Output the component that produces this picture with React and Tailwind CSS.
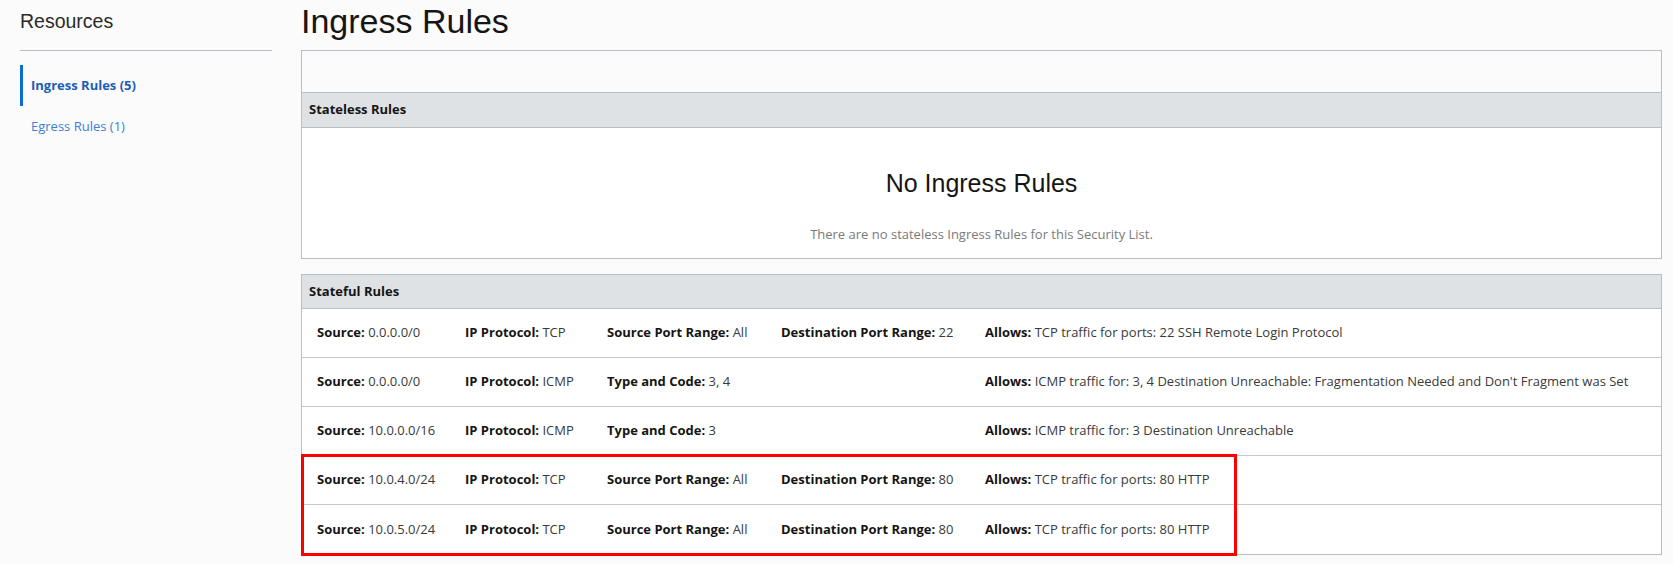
import React from 'react';

// Stateful rules shown in the second panel
const statefulRules = [
  {
    source: '0.0.0.0/0',
    protocol: 'TCP',
    third: { label: 'Source Port Range:', value: 'All' },
    fourth: { label: 'Destination Port Range:', value: '22' },
    allows: 'TCP traffic for ports: 22 SSH Remote Login Protocol',
  },
  {
    source: '0.0.0.0/0',
    protocol: 'ICMP',
    third: { label: 'Type and Code:', value: '3, 4' },
    fourth: null,
    allows: "ICMP traffic for: 3, 4 Destination Unreachable: Fragmentation Needed and Don't Fragment was Set",
  },
  {
    source: '10.0.0.0/16',
    protocol: 'ICMP',
    third: { label: 'Type and Code:', value: '3' },
    fourth: null,
    allows: 'ICMP traffic for: 3 Destination Unreachable',
  },
  {
    source: '10.0.4.0/24',
    protocol: 'TCP',
    third: { label: 'Source Port Range:', value: 'All' },
    fourth: { label: 'Destination Port Range:', value: '80' },
    allows: 'TCP traffic for ports: 80 HTTP',
  },
  {
    source: '10.0.5.0/24',
    protocol: 'TCP',
    third: { label: 'Source Port Range:', value: 'All' },
    fourth: { label: 'Destination Port Range:', value: '80' },
    allows: 'TCP traffic for ports: 80 HTTP',
  },
];

function Field({ label, value }) {
  return (
    <span className="whitespace-nowrap">
      <span className="font-bold text-[#161513]">{label}</span>{' '}
      <span className="text-[#3a3a3a]">{value}</span>
    </span>
  );
}

function RuleRow({ rule, last }) {
  return (
    <div
      className={`h-[49px] grid grid-cols-[148px_142px_174px_204px_1fr] items-center pl-[15px] text-[13px] ${
        last ? '' : 'border-b border-[#c3c8ce]'
      }`}
    >
      <Field label="Source:" value={rule.source} />
      <Field label="IP Protocol:" value={rule.protocol} />
      <Field label={rule.third.label} value={rule.third.value} />
      {rule.fourth ? <Field label={rule.fourth.label} value={rule.fourth.value} /> : <span />}
      <Field label="Allows:" value={rule.allows} />
    </div>
  );
}

export default function App() {
  const highlighted = statefulRules.slice(3);
  const plain = statefulRules.slice(0, 3);

  return (
    <div className="w-[1673px] h-[564px] bg-[#fbfbfb] flex font-['Open_Sans',sans-serif] overflow-hidden">
      {/* --- SIDEBAR --- */}
      <div className="w-[252px] ml-[20px] shrink-0">
        <div className="h-[51px] border-b border-[#b5bcc4]">
          <h2 className="font-['Liberation_Sans',Arial,sans-serif] text-[19.5px] leading-[42px] text-[#2b2a28]">
            Resources
          </h2>
        </div>
        <div className="mt-[14px]">
          <div className="h-[41px] flex items-center border-l-[3px] border-[#0a6fd1] pl-[8px] text-[13px] font-bold text-[#1b5eb5]">
            Ingress Rules (5)
          </div>
          <div className="h-[41px] flex items-center pl-[11px] text-[13px] text-[#3b7fd3]">
            Egress Rules (1)
          </div>
        </div>
      </div>

      {/* --- MAIN --- */}
      <div className="ml-[29px] w-[1361px]">
        <div className="h-[50px]">
          <h1 className="font-['Liberation_Sans',Arial,sans-serif] text-[34px] leading-[43px] text-[#161513]">
            Ingress Rules
          </h1>
        </div>

        {/* Stateless panel */}
        <div className="border border-[#b8bec6] bg-white">
          <div className="h-[42px] bg-[#fbfbfb] border-b border-[#b8bec6]" />
          <div className="h-[35px] bg-[#dfe2e5] border-b border-[#b8bec6] flex items-center pl-[7px] text-[13px] font-bold text-[#161513]">
            Stateless Rules
          </div>
          <div className="h-[130px] flex flex-col items-center pt-[40px]">
            <p className="font-['Liberation_Sans',Arial,sans-serif] text-[25px] leading-[30px] text-[#161513]">
              No Ingress Rules
            </p>
            <p className="mt-[27px] text-[13px] leading-[18px] text-[#7a7a7a]">
              There are no stateless Ingress Rules for this Security List.
            </p>
          </div>
        </div>

        {/* Stateful panel */}
        <div className="mt-[15px] border border-[#b8bec6] bg-white">
          <div className="h-[34px] bg-[#dfe2e5] border-b border-[#b8bec6] flex items-center pl-[7px] text-[13px] font-bold text-[#161513]">
            Stateful Rules
          </div>
          {plain.map((rule, i) => (
            <RuleRow key={i} rule={rule} />
          ))}
          <div className="relative">
            {highlighted.map((rule, i) => (
              <RuleRow key={i} rule={rule} last={i === highlighted.length - 1} />
            ))}
            <div className="absolute left-[-1px] top-[-2px] bottom-[-2px] w-[936px] border-[3px] border-[#ff0000] pointer-events-none" />
          </div>
        </div>
      </div>
    </div>
  );
}
